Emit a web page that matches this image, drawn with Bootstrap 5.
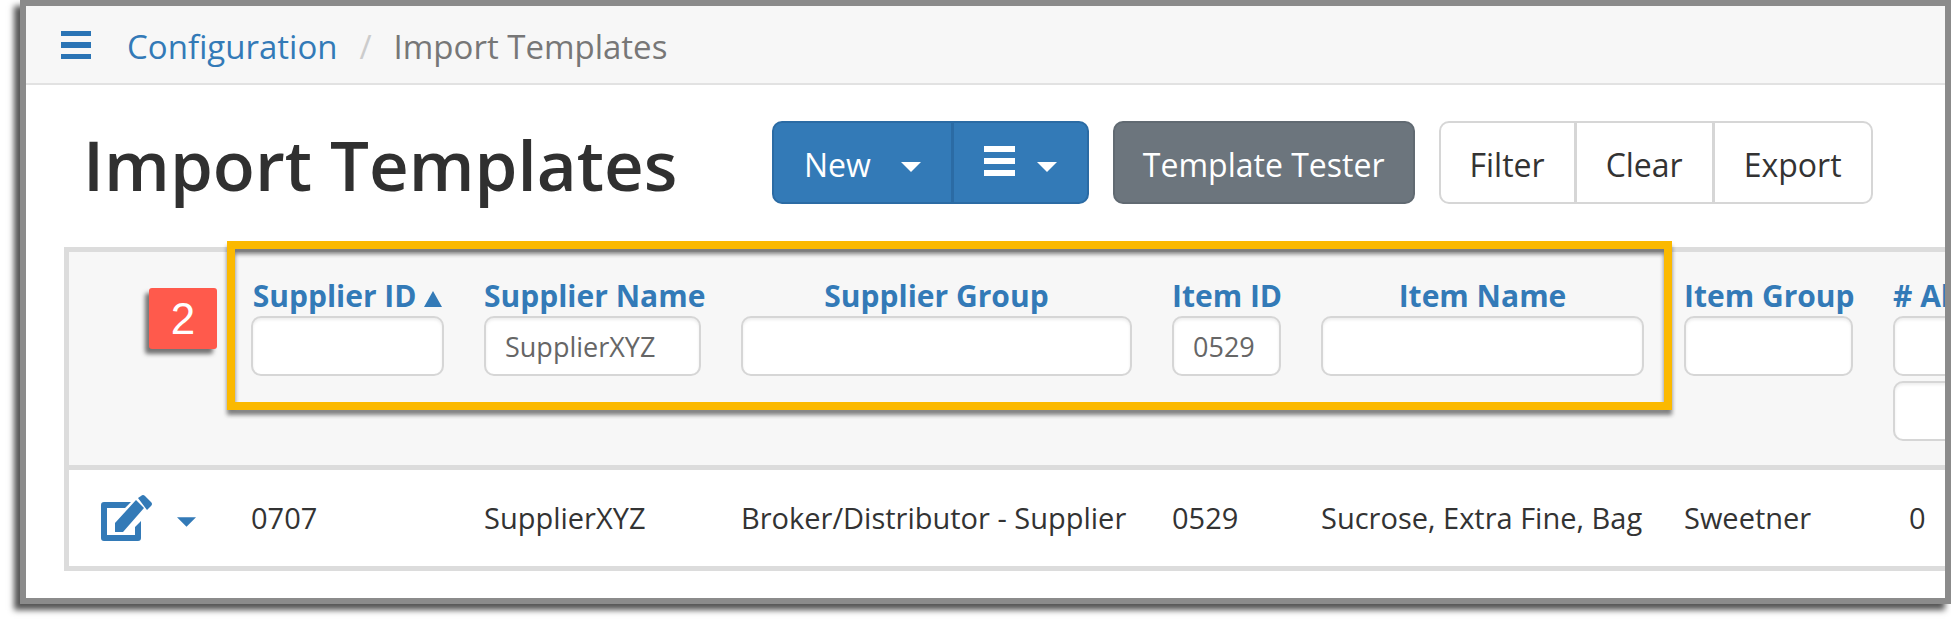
<!DOCTYPE html>
<html lang="en">
<head>
<meta charset="utf-8">
<meta name="viewport" content="width=device-width, initial-scale=1">
<title>Import Templates</title>
<link rel="stylesheet" href="https://cdn.jsdelivr.net/npm/bootstrap@5.3.0/dist/css/bootstrap.min.css">
<style>
body{font-family:"Open Sans","Noto Sans",sans-serif;color:#333;background:#fff;overflow-x:hidden}
a{color:#337ab7;text-decoration:none}
.app-frame{margin:0 0 20px 20px;border:6px solid #8b8b8b;background:#fff;box-shadow:-6px 6px 6px #555}
.app-clip{overflow:hidden}
.top-bar{height:79px;padding:4px 35px 0;background:#f7f7f7;border-bottom:2px solid #e2e2e2}
.menu-btn{border:0;background:none;padding:0 0 3px;color:#2a74b5;line-height:0}
.breadcrumb{font-size:33px;line-height:48px;margin-left:36px;--bs-breadcrumb-divider-color:#ccc;--bs-breadcrumb-item-padding-x:22px;--bs-breadcrumb-item-active-color:#777}
.title-row{padding:36px 0 0 57px;height:162px}
.title-row h1{font-size:69px;font-weight:600;line-height:87px;color:#303030;width:689px}
.tool-btn{--bs-btn-font-size:32px;--bs-btn-line-height:48px;--bs-btn-padding-x:30px;--bs-btn-border-width:2px;--bs-btn-border-radius:10px;height:83px;padding-top:18px;padding-bottom:13px}
.tool-blue{--bs-btn-bg:#337ab7;--bs-btn-border-color:#2b6ba4;--bs-btn-color:#fff;--bs-btn-hover-bg:#2b6ba4;--bs-btn-hover-color:#fff}
.tool-gray{--bs-btn-padding-x:28px;--bs-btn-bg:#6c757d;--bs-btn-border-color:#616a72;--bs-btn-color:#fff;--bs-btn-hover-bg:#5c636a;--bs-btn-hover-color:#fff}
.tool-light{--bs-btn-padding-x:29px;--bs-btn-bg:#fff;--bs-btn-border-color:#d6d6d6;--bs-btn-color:#333;--bs-btn-hover-bg:#eee}
.gap-new{gap:30px}
.gap-list{gap:22px}
.table-zone{margin-left:38px;padding-bottom:27px}
.grid-table{table-layout:fixed;width:2080px;border:5px solid #dcdcdc;border-collapse:separate;border-spacing:0;font-size:29px;line-height:40px;white-space:nowrap}
.grid-table th{background:#f7f7f7;vertical-align:top;text-align:center;font-weight:700;font-size:30px;line-height:40px;padding:24px 20px 20px;border-bottom:5px solid #dcdcdc;height:218px}
.grid-table th a{display:block}
.grid-table td{padding:0 20px;height:96px;vertical-align:middle}
.grid-table .form-control{height:60px;border:2px solid #d6d6d6;border-radius:10px;padding:6px 19px;font-size:27px;color:#666;box-shadow:inset 0 2px 3px #00000012}
.grid-table .form-control + .form-control{margin-top:5px}
.row-tools{padding-left:12px}
.focus-box{left:163px;top:-6px;width:1445px;height:169px;border:8px solid #fbb900;pointer-events:none;filter:drop-shadow(0 5px 2px #444a)}
.step-tag{left:85px;top:41px;width:68px;height:61px;border-radius:3px;background:#ff5a4c;color:#fff;font:44px/61px "Liberation Sans",sans-serif;box-shadow:-4px 5px 4px #444b}
</style>
</head>
<body>
<div class="app-frame">
<div class="app-clip">
  <header class="top-bar d-flex align-items-center">
    <button class="menu-btn" type="button" aria-label="Menu">
      <svg width="30" height="30" viewBox="0 0 30 30" fill="currentColor"><path d="M0 1h30v5H0zM0 12h30v6H0zM0 24h30v5H0z"/></svg>
    </button>
    <nav aria-label="breadcrumb">
      <ol class="breadcrumb mb-0">
        <li class="breadcrumb-item"><a href="#">Configuration</a></li>
        <li class="breadcrumb-item active" aria-current="page">Import Templates</li>
      </ol>
    </nav>
  </header>
  <main>
    <div class="title-row d-flex align-items-start">
      <h1 class="mb-0 flex-shrink-0 text-nowrap">Import Templates</h1>
      <div class="d-flex gap-4 flex-shrink-0">
        <div class="btn-group">
          <button class="btn tool-btn tool-blue d-flex align-items-center gap-new" type="button">New
            <svg class="mt-1" width="20" height="10" viewBox="0 0 20 10" fill="currentColor"><path d="M0 0h20L10 10z"/></svg></button>
          <button class="btn tool-btn tool-blue d-flex align-items-center gap-list" type="button" aria-label="List options">
            <svg class="mb-2" width="31" height="30" viewBox="0 0 31 30" fill="currentColor"><path d="M0 0h31v6H0zM0 12h31v6H0zM0 24h31v6H0z"/></svg>
            <svg class="mt-1" width="20" height="10" viewBox="0 0 20 10" fill="currentColor"><path d="M0 0h20L10 10z"/></svg></button>
        </div>
        <button class="btn tool-btn tool-gray" type="button">Template Tester</button>
        <div class="btn-group">
          <button class="btn tool-btn tool-light" type="button">Filter</button>
          <button class="btn tool-btn tool-light" type="button">Clear</button>
          <button class="btn tool-btn tool-light" type="button">Export</button>
        </div>
      </div>
    </div>
    <div class="table-zone position-relative">
      <table class="grid-table">
        <colgroup><col style="width:162px"><col style="width:233px"><col style="width:257px"><col style="width:431px"><col style="width:149px"><col style="width:363px"><col style="width:209px"><col></colgroup>
        <thead>
          <tr>
            <th></th>
            <th><a href="#">Supplier ID <svg width="18" height="16" viewBox="0 0 18 16" fill="currentColor"><path d="M9 0l9 16H0z"/></svg></a><input class="form-control" type="text" aria-label="Supplier ID"></th>
            <th><a href="#">Supplier Name</a><input class="form-control" type="text" value="SupplierXYZ" aria-label="Supplier Name"></th>
            <th><a href="#">Supplier Group</a><input class="form-control" type="text" aria-label="Supplier Group"></th>
            <th><a href="#">Item ID</a><input class="form-control" type="text" value="0529" aria-label="Item ID"></th>
            <th><a href="#">Item Name</a><input class="form-control" type="text" aria-label="Item Name"></th>
            <th><a href="#">Item Group</a><input class="form-control" type="text" aria-label="Item Group"></th>
            <th class="text-start"><a href="#"># Al</a><input class="form-control" type="text" aria-label="Minimum"><input class="form-control" type="text" aria-label="Maximum"></th>
          </tr>
        </thead>
        <tbody>
          <tr>
            <td><a href="#" class="row-tools d-flex align-items-center" aria-label="Edit">
              <svg width="52" height="46" viewBox="0 0 52 46" fill="currentColor"><path d="M3 7h27l-6 6H6v27h28V32l6-6v17q0 3-3 3H3q-3 0-3-3V10q0-3 3-3zM35 5l8 8-21 24h-8v-9zM37 3l3-2q2-2 4 0l6 6q2 2 0 4l-4 4z"/></svg>
              <svg class="ms-4 mt-2" width="19" height="10" viewBox="0 0 20 10" fill="currentColor"><path d="M0 0h20L10 10z"/></svg></a></td>
            <td>0707</td><td>SupplierXYZ</td><td>Broker/Distributor - Supplier</td><td>0529</td><td>Sucrose, Extra Fine, Bag</td><td>Sweetner</td><td><span class="ps-3">0</span></td>
          </tr>
        </tbody>
      </table>
      <div class="focus-box position-absolute"></div>
      <div class="step-tag position-absolute text-center">2</div>
    </div>
  </main>
</div>
</div>
<script src="https://cdn.jsdelivr.net/npm/bootstrap@5.3.0/dist/js/bootstrap.bundle.min.js"></script>
</body>
</html>
